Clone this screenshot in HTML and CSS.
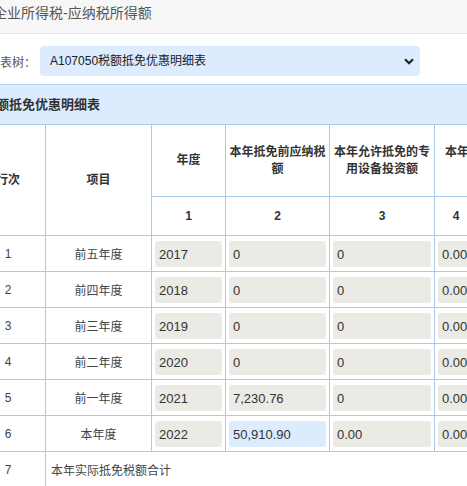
FILE: index.html
```html
<!DOCTYPE html>
<html lang="zh-CN">

<head>
    <meta charset="UTF-8">
    <meta name="viewport" content="width=device-width, initial-scale=1.0">
    <title>A107050税额抵免优惠明细表</title>
    <link rel="stylesheet" href="styles.css">
</head>

<body>
    <div class="page">
        <div class="topbar">企业所得税-应纳税所得额</div>

        <div class="treerow">
            <label for="tree">报表树：</label>
            <div class="selectwrap">
                <select id="tree" class="treeselect">
                    <option>A107050税额抵免优惠明细表</option>
                </select>
                <svg class="chevron" width="10" height="7" viewBox="0 0 10 7">
                    <path d="M1 1.2 L5 5.2 L9 1.2" fill="none" stroke="#222" stroke-width="2.2" />
                </svg>
            </div>
        </div>

        <div class="section">税额抵免优惠明细表</div>

        <table class="grid">
            <colgroup>
                <col style="width:75px">
                <col style="width:106px">
                <col style="width:74px">
                <col style="width:104px">
                <col style="width:105px">
                <col style="width:105px">
                <col style="width:105px">
            </colgroup>
            <thead>
                <tr class="head1">
                    <th rowspan="2">行次</th>
                    <th rowspan="2">项目</th>
                    <th>年度</th>
                    <th>本年抵免前应纳税额</th>
                    <th>本年允许抵免的专用设备投资额</th>
                    <th>本年可抵免税额<br>(元)</th>
                    <th>以前年度已抵免额</th>
                </tr>
                <tr class="head2">
                    <th>1</th>
                    <th>2</th>
                    <th>3</th>
                    <th>4（3×10%）</th>
                    <th>5</th>
                </tr>
            </thead>
            <tbody>
                <tr>
                    <td class="num">1</td>
                    <td class="item">前五年度</td>
                    <td><input class="cell" value="2017" readonly></td>
                    <td><input class="cell" value="0" readonly></td>
                    <td><input class="cell" value="0" readonly></td>
                    <td><input class="cell" value="0.00" readonly></td>
                    <td><input class="cell" value="0.00" readonly></td>
                </tr>
                <tr>
                    <td class="num">2</td>
                    <td class="item">前四年度</td>
                    <td><input class="cell" value="2018" readonly></td>
                    <td><input class="cell" value="0" readonly></td>
                    <td><input class="cell" value="0" readonly></td>
                    <td><input class="cell" value="0.00" readonly></td>
                    <td><input class="cell" value="0.00" readonly></td>
                </tr>
                <tr>
                    <td class="num">3</td>
                    <td class="item">前三年度</td>
                    <td><input class="cell" value="2019" readonly></td>
                    <td><input class="cell" value="0" readonly></td>
                    <td><input class="cell" value="0" readonly></td>
                    <td><input class="cell" value="0.00" readonly></td>
                    <td><input class="cell" value="0.00" readonly></td>
                </tr>
                <tr>
                    <td class="num">4</td>
                    <td class="item">前二年度</td>
                    <td><input class="cell" value="2020" readonly></td>
                    <td><input class="cell" value="0" readonly></td>
                    <td><input class="cell" value="0" readonly></td>
                    <td><input class="cell" value="0.00" readonly></td>
                    <td><input class="cell" value="0.00" readonly></td>
                </tr>
                <tr>
                    <td class="num">5</td>
                    <td class="item">前一年度</td>
                    <td><input class="cell" value="2021" readonly></td>
                    <td><input class="cell" value="7,230.76" readonly></td>
                    <td><input class="cell" value="0" readonly></td>
                    <td><input class="cell" value="0.00" readonly></td>
                    <td><input class="cell" value="0.00" readonly></td>
                </tr>
                <tr>
                    <td class="num">6</td>
                    <td class="item">本年度</td>
                    <td><input class="cell" value="2022" readonly></td>
                    <td><input class="cell editable" value="50,910.90"></td>
                    <td><input class="cell" value="0.00" readonly></td>
                    <td><input class="cell" value="0.00" readonly></td>
                    <td><input class="cell" value="0.00" readonly></td>
                </tr>
                <tr>
                    <td class="num">7</td>
                    <td class="total" colspan="5">本年实际抵免税额合计</td>
                    <td><input class="cell" value="0.00" readonly></td>
                </tr>
            </tbody>
        </table>
    </div>
</body>

</html>
```

FILE: styles.css
```css
body {
    margin: 0;
    width: 467px;
    height: 486px;
    overflow: hidden;
    background-color: #fff;
    font-family: "Liberation Sans", "Noto Sans CJK SC", sans-serif;
    color: #333;
}

.page {
    margin-left: -30px;
    width: 800px;
}

/* title bar */
.topbar {
    height: 33px;
    line-height: 27px;
    padding-left: 23px;
    background-color: #f7f7f7;
    border-bottom: 1px solid #e8e8e8;
    font-size: 14px;
    color: #555;
}

/* report tree select */
.treerow {
    display: flex;
    align-items: center;
    padding: 12px 0 8px 18px;
}

.treerow label {
    font-size: 12px;
    color: #555;
}

.selectwrap {
    position: relative;
    margin-left: 4px;
}

.treeselect {
    display: block;
    appearance: none;
    width: 380px;
    height: 30px;
    padding: 0 0 0 10px;
    border: none;
    border-radius: 4px;
    background-color: #dcebfd;
    font-family: "Liberation Sans", "Noto Sans CJK SC", sans-serif;
    font-size: 12px;
    color: #222;
}

.chevron {
    position: absolute;
    right: 6px;
    top: 12px;
    pointer-events: none;
}

/* section title */
.section {
    height: 39px;
    line-height: 39px;
    padding-left: 13px;
    background-color: #dcebfd;
    border-top: 1px solid #b3d1f1;
    font-size: 13px;
    font-weight: bold;
    color: #333;
}

/* table */
.grid {
    border-collapse: collapse;
    table-layout: fixed;
    width: 674px;
    font-size: 12px;
}

.grid th,
.grid td {
    border: 1px solid #abcbee;
    padding: 0;
}

.grid th {
    font-weight: bold;
    color: #333;
    line-height: 17px;
    padding: 0 1px;
}

.head1 th {
    height: 71px;
}

.head2 th {
    height: 38px;
}

.grid td {
    height: 35px;
    padding: 0 3px;
    color: #444;
}

.num {
    text-align: center;
}

.item {
    text-align: center;
}

.total {
    text-align: left;
    padding-left: 5px !important;
}

.cell {
    display: block;
    box-sizing: border-box;
    width: 100%;
    height: 26px;
    margin-top: 1px;
    padding: 0 4px;
    border: none;
    border-radius: 3px;
    background-color: #ebeae4;
    font-family: "Liberation Sans", sans-serif;
    font-size: 13px;
    color: #333;
    outline: none;
}

.editable {
    background-color: #dcebfd;
}
```
